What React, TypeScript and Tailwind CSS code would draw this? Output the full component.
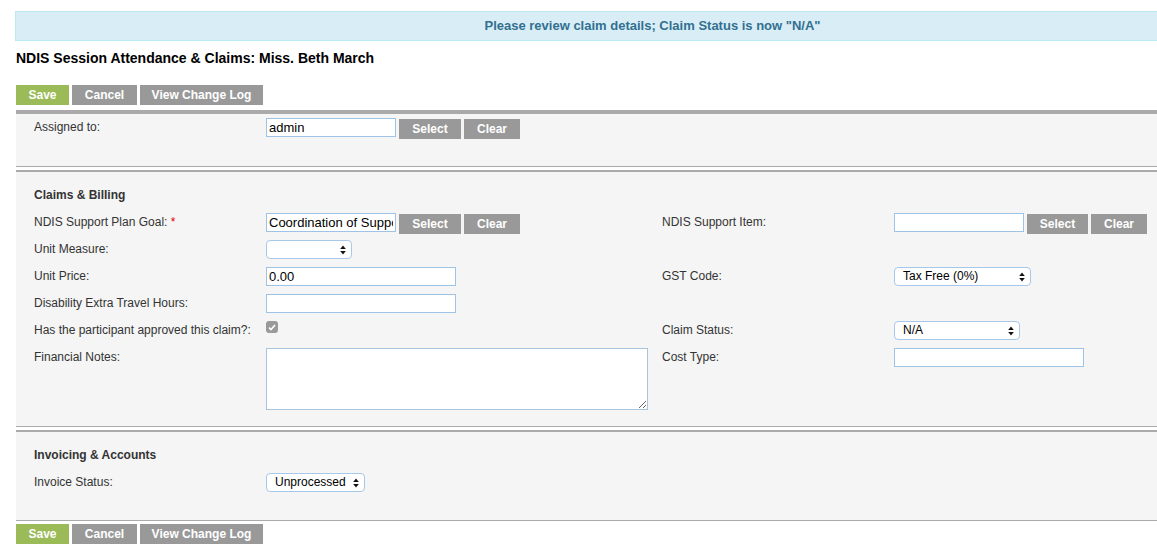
import type { ReactNode } from "react";

function Btn({ children, w, green }: { children: ReactNode; w: string; green?: boolean }) {
  return (
    <button
      className={`${w} h-[20px] shrink-0 text-[12px] font-bold leading-[20px] text-white ${
        green ? "bg-[#9bbb59]" : "bg-[#999999]"
      }`}
    >
      {children}
    </button>
  );
}

function ActionBar() {
  return (
    <div className="flex gap-[3px]">
      <Btn w="w-[53px]" green>
        Save
      </Btn>
      <Btn w="w-[65px]">Cancel</Btn>
      <Btn w="w-[123px]">View Change Log</Btn>
    </div>
  );
}

function TextInput({ w, value }: { w: string; value?: string }) {
  return (
    <input
      readOnly
      value={value ?? ""}
      className={`${w} h-[19px] border border-[#9fc3e6] bg-white px-[2px] text-[13px] leading-[17px] text-black outline-none`}
    />
  );
}

// text box + Select / Clear; the buttons sit 1px lower and hang below the row
function Lookup({ w, value, selW }: { w: string; value?: string; selW: string }) {
  return (
    <div className="flex h-[19px] items-start gap-[3px]">
      <TextInput w={w} value={value} />
      <div className="mt-px flex gap-[3px]">
        <Btn w={selW}>Select</Btn>
        <Btn w="w-[56px]">Clear</Btn>
      </div>
    </div>
  );
}

function Arrows() {
  return (
    <svg
      className="pointer-events-none absolute right-[6px] top-1/2 -translate-y-1/2"
      width="6"
      height="10"
      viewBox="0 0 6 10"
    >
      <path d="M3 0.5 L5.8 4 L0.2 4 Z" fill="#111" />
      <path d="M3 9.5 L5.8 6 L0.2 6 Z" fill="#111" />
    </svg>
  );
}

function Select({ w, value }: { w: string; value?: string }) {
  return (
    <div className={`relative ${w} h-[19px]`}>
      <div className="h-full w-full rounded-[4px] border border-[#a7c8e8] bg-white pl-[8px] text-[12px] leading-[17px] text-black">
        {value ?? ""}
      </div>
      <Arrows />
    </div>
  );
}

function Label({ children, req }: { children: ReactNode; req?: boolean }) {
  return (
    <div className="text-[12px] leading-[19px] text-[#333]">
      {children}
      {req && <span className="text-[#d00]"> *</span>}
    </div>
  );
}

function Heading({ children }: { children: ReactNode }) {
  return <div className="h-[14px] text-[12px] font-bold leading-[14px] text-[#333]">{children}</div>;
}

export default function App() {
  return (
    <div
      className="w-[1157px] overflow-hidden bg-white"
      style={{ fontFamily: '"Liberation Sans", Arial, Helvetica, sans-serif' }}
    >
      <div className="w-[1290px] pb-[10px] pl-4">
        {/* status banner */}
        <div className="-ml-px mt-[11px] flex h-[30px] items-center justify-center border border-[#bce8f1] bg-[#d9edf7] text-[13px] font-bold text-[#31708f]">
          Please review claim details; Claim Status is now "N/A"
        </div>

        <h1 className="mt-[9px] h-4 text-[14px] font-bold leading-4 text-black">
          NDIS Session Attendance &amp; Claims: Miss. Beth March
        </h1>

        <div className="mt-[19px]">
          <ActionBar />
        </div>

        {/* assigned */}
        <div className="mt-[5px] border-t-4 border-b border-[#aaaaaa] bg-[#f5f5f5] pb-[29px] pl-[18px] pt-[4px]">
          <div className="grid grid-cols-[232px_396px_232px_1fr]">
            <Label>Assigned to:</Label>
            <Lookup w="w-[130px]" value="admin" selW="w-[62px]" />
          </div>
        </div>

        {/* claims & billing */}
        <div className="mt-[3px] border-t-2 border-b border-[#aaaaaa] bg-[#f5f5f5] pb-[16px] pl-[18px] pt-[16px]">
          <Heading>Claims &amp; Billing</Heading>
          <div className="mt-[11px] grid grid-cols-[232px_396px_232px_1fr] gap-y-[8px]">
            <Label req>NDIS Support Plan Goal:</Label>
            <Lookup w="w-[130px]" value="Coordination of Supports" selW="w-[62px]" />
            <Label>NDIS Support Item:</Label>
            <Lookup w="w-[130px]" selW="w-[61px]" />

            <Label>Unit Measure:</Label>
            <Select w="w-[86px]" />
            <div />
            <div />

            <Label>Unit Price:</Label>
            <TextInput w="w-[190px]" value="0.00" />
            <Label>GST Code:</Label>
            <Select w="w-[137px]" value="Tax Free (0%)" />

            <Label>Disability Extra Travel Hours:</Label>
            <TextInput w="w-[190px]" />
            <div />
            <div />

            <Label>Has the participant approved this claim?:</Label>
            <div>
              <div className="flex h-[12px] w-[12px] items-center justify-center rounded-[3px] bg-[#9a9a9a]">
                <svg width="8" height="7" viewBox="0 0 8 7">
                  <path d="M1 3.6 L3 5.6 L7 1" stroke="white" strokeWidth="1.6" fill="none" />
                </svg>
              </div>
            </div>
            <Label>Claim Status:</Label>
            <Select w="w-[126px]" value="N/A" />

            <Label>Financial Notes:</Label>
            <textarea
              readOnly
              className="h-[62px] w-[382px] border border-[#a9c5de] bg-white outline-none"
            />
            <Label>Cost Type:</Label>
            <TextInput w="w-[190px]" />
          </div>
        </div>

        {/* invoicing */}
        <div className="mt-[3px] border-t-2 border-b border-[#aaaaaa] bg-[#f5f5f5] pb-[28px] pl-[18px] pt-[16px]">
          <Heading>Invoicing &amp; Accounts</Heading>
          <div className="mt-[11px] grid grid-cols-[232px_396px_232px_1fr]">
            <Label>Invoice Status:</Label>
            <Select w="w-[99px]" value="Unprocessed" />
          </div>
        </div>

        <div className="mt-[3px]">
          <ActionBar />
        </div>
      </div>
    </div>
  );
}
